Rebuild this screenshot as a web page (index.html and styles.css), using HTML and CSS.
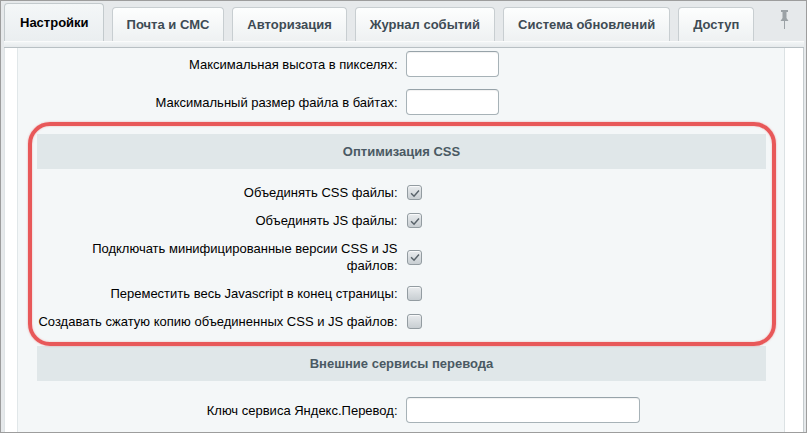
FILE: index.html
```html
<!DOCTYPE html>
<html lang="ru">
<head>
<meta charset="utf-8">
<title>Настройки</title>
<link rel="stylesheet" href="styles.css">
</head>
<body>
<div class="frame">
  <div class="tabs">
    <div class="tab active">Настройки</div>
    <div class="tab">Почта и СМС</div>
    <div class="tab">Авторизация</div>
    <div class="tab">Журнал событий</div>
    <div class="tab">Система обновлений</div>
    <div class="tab">Доступ</div>
    <svg class="pin" width="9" height="19" viewBox="0 0 9 19" aria-hidden="true">
      <path d="M1 0h7v2H6.5v6l2 3H.5l2-3V2H1z" fill="#9ca2a6"/>
      <rect x="4" y="11" width="1" height="8" fill="#9ca2a6"/>
    </svg>
  </div>
  <div class="band"></div>
  <div class="panel">
    <div class="content">
      <div class="form">
        <div class="row row-field">
          <div class="label">Максимальная высота в пикселях:</div>
          <div class="control"><input class="text-input small" type="text"></div>
        </div>
        <div class="row row-field">
          <div class="label">Максимальный размер файла в байтах:</div>
          <div class="control"><input class="text-input small" type="text"></div>
        </div>

        <div class="heading">Оптимизация CSS</div>
        <div class="row row-check">
          <div class="label">Объединять CSS файлы:</div>
          <div class="control"><span class="checkbox checked"><svg width="14" height="14" viewBox="0 0 14 14"><path d="M3.3 7.3l3.2 3.2L11.8 4.3" fill="none" stroke="#59636a" stroke-width="1.6"/></svg></span></div>
        </div>
        <div class="row row-check">
          <div class="label">Объединять JS файлы:</div>
          <div class="control"><span class="checkbox checked"><svg width="14" height="14" viewBox="0 0 14 14"><path d="M3.3 7.3l3.2 3.2L11.8 4.3" fill="none" stroke="#59636a" stroke-width="1.6"/></svg></span></div>
        </div>
        <div class="row row-check">
          <div class="label">Подключать минифицированные версии CSS и JS<br>файлов:</div>
          <div class="control"><span class="checkbox checked"><svg width="14" height="14" viewBox="0 0 14 14"><path d="M3.3 7.3l3.2 3.2L11.8 4.3" fill="none" stroke="#59636a" stroke-width="1.6"/></svg></span></div>
        </div>
        <div class="row row-check">
          <div class="label">Переместить весь Javascript в конец страницы:</div>
          <div class="control"><span class="checkbox"></span></div>
        </div>
        <div class="row row-check">
          <div class="label">Создавать сжатую копию объединенных CSS и JS файлов:</div>
          <div class="control"><span class="checkbox"></span></div>
        </div>

        <div class="heading">Внешние сервисы перевода</div>
        <div class="row row-field row-after-heading">
          <div class="label">Ключ сервиса Яндекс.Перевод:</div>
          <div class="control"><input class="text-input wide" type="text"></div>
        </div>
      </div>
    </div>
  </div>
  <div class="highlight"></div>
</div>
</body>
</html>
```

FILE: styles.css
```css
html, body {
  margin: 0;
  padding: 0;
}

body {
  font-family: "Liberation Sans", Arial, Helvetica, sans-serif;
  font-size: 13px;
  color: #000;
}

.frame {
  position: relative;
  width: 807px;
  height: 433px;
  box-sizing: border-box;
  border: 1px solid #9d9d9d;
  background: #e6e9eb;
  padding: 0 2px 0 3px;
  display: flex;
  flex-direction: column;
  overflow: hidden;
}

/* tab strip */
.tabs {
  height: 40px;
  display: flex;
  align-items: flex-end;
  gap: 8px;
  flex: none;
}

.tab {
  height: 34px;
  padding: 0 14px;
  display: flex;
  align-items: center;
  box-sizing: border-box;
  border: 1px solid #c8ced1;
  border-bottom: none;
  border-radius: 4px 4px 0 0;
  background: linear-gradient(#fdfefe, #eef1f2);
  font-weight: bold;
  color: #3e4b54;
  white-space: nowrap;
}

.tab.active {
  height: 38px;
  padding: 0 14px 0 15px;
  color: #000;
  background: linear-gradient(#f4f7f8, #eaeef0);
  border-color: #c3cacd;
}

.pin {
  margin-left: auto;
  margin-right: 15px;
  align-self: flex-start;
  margin-top: 9px;
}

/* strip joining the tabs to the panel */
.band {
  flex: none;
  height: 5px;
  border-top: 1px solid #fafbfb;
  border-bottom: 1px solid #b8c0c4;
  background: linear-gradient(#f2f5f6, #e6eaec);
}

.panel {
  flex: 1;
  display: flex;
  background: #fff;
  padding: 0 18px 0 12px;
  border-left: 1px solid #dfe4e6;
  border-right: 1px solid #c4cbce;
  min-height: 0;
}

.content {
  flex: 1;
  background: #f4f7f8;
  border-left: 1px solid #e1e7e9;
  border-right: 1px solid #dce2e4;
  overflow: hidden;
}

.form {
  padding: 0 18px 0 19px;
}

.row {
  display: grid;
  grid-template-columns: 1fr 1fr;
  align-items: center;
}

.label {
  text-align: right;
  padding-right: 4px;
  line-height: 17px;
  white-space: nowrap;
}

.control {
  padding-left: 4px;
  display: flex;
  align-items: center;
}

.row-field {
  padding: 3px 0 9px;
}

.row-after-heading {
  padding-top: 6px;
}

.row-check {
  min-height: 28px;
  padding: 5px 0 6px;
  box-sizing: border-box;
}

.heading {
  margin: 10px 0 10px;
  height: 35px;
  display: flex;
  align-items: center;
  justify-content: center;
  background: #e0e7e9;
  font-weight: bold;
  color: #4a5963;
}

.text-input {
  height: 26px;
  box-sizing: border-box;
  border: 1px solid #a7b2b7;
  border-top-color: #97a3a9;
  border-radius: 4px;
  background: #fff;
  box-shadow: inset 0 1px 1px rgba(0, 0, 0, 0.06);
  padding: 0 5px;
  font: inherit;
  margin: 0;
}

.text-input.small {
  width: 93px;
}

.text-input.wide {
  width: 234px;
}

.checkbox {
  width: 15px;
  height: 15px;
  box-sizing: border-box;
  border: 1px solid #939ca1;
  border-radius: 3px;
  background: linear-gradient(#e9ecee, #c8ced2);
  box-shadow: inset 0 1px 0 rgba(255, 255, 255, 0.7);
  display: inline-flex;
  align-items: center;
  justify-content: center;
  margin-left: 1px;
}

.checkbox svg {
  display: block;
}

/* red callout around the CSS optimisation block */
.highlight {
  position: absolute;
  left: 27px;
  top: 121px;
  width: 748px;
  height: 224px;
  box-sizing: border-box;
  border: 4px solid #e85859;
  border-radius: 22px;
  box-shadow: 0 0 2px rgba(232, 88, 89, 0.55), inset 0 0 2px rgba(232, 88, 89, 0.45);
  pointer-events: none;
}
```
